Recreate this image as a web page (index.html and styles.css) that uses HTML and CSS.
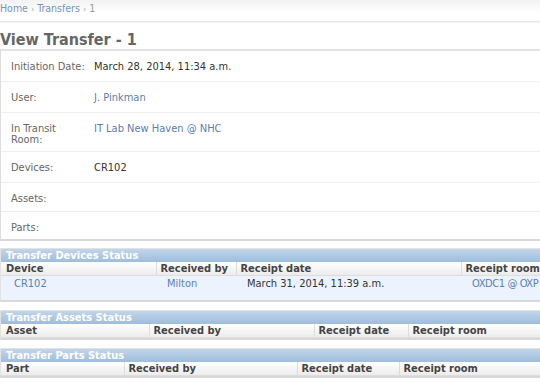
FILE: index.html
```html
<!DOCTYPE html>
<html lang="en">
<head>
  <meta charset="UTF-8">
  <title>View Transfer - 1</title>
  <link rel="stylesheet" href="styles.css">
</head>
<body>

  <div class="breadcrumbs">
    <a href="#">Home</a> <span class="sep">&rsaquo;</span> <a href="#">Transfers</a> <span class="sep">&rsaquo;</span> 1
  </div>

  <div class="content">
    <h1>View Transfer - 1</h1>

    <div class="details">
      <div class="form-row">
        <div class="label">Initiation Date:</div>
        <div class="value">March 28, 2014, 11:34 a.m.</div>
      </div>
      <div class="form-row">
        <div class="label">User:</div>
        <div class="value"><a href="#">J. Pinkman</a></div>
      </div>
      <div class="form-row">
        <div class="label">In Transit Room:</div>
        <div class="value"><a href="#">IT Lab New Haven @ NHC</a></div>
      </div>
      <div class="form-row">
        <div class="label">Devices:</div>
        <div class="value">CR102</div>
      </div>
      <div class="form-row">
        <div class="label">Assets:</div>
        <div class="value empty"></div>
      </div>
      <div class="form-row last">
        <div class="label">Parts:</div>
      </div>
    </div>

    <div class="module">
      <h2>Transfer Devices Status</h2>
      <table>
        <colgroup>
          <col style="width: 155px">
          <col style="width: 80px">
          <col style="width: 225px">
          <col style="width: 140px">
        </colgroup>
        <thead>
          <tr><th>Device</th><th>Received by</th><th>Receipt date</th><th>Receipt room</th></tr>
        </thead>
        <tbody>
          <tr>
            <td><a href="#">CR102</a></td>
            <td><a href="#">Milton</a></td>
            <td>March 31, 2014, 11:39 a.m.</td>
            <td class="room"><a href="#">OXDC1 @ OXP</a></td>
          </tr>
        </tbody>
      </table>
    </div>

    <div class="module">
      <h2>Transfer Assets Status</h2>
      <table>
        <colgroup>
          <col style="width: 148px">
          <col style="width: 165px">
          <col style="width: 94px">
          <col style="width: 193px">
        </colgroup>
        <thead>
          <tr><th>Asset</th><th>Received by</th><th>Receipt date</th><th>Receipt room</th></tr>
        </thead>
      </table>
    </div>

    <div class="module">
      <h2>Transfer Parts Status</h2>
      <table>
        <colgroup>
          <col style="width: 123px">
          <col style="width: 173px">
          <col style="width: 102px">
          <col style="width: 202px">
        </colgroup>
        <thead>
          <tr><th>Part</th><th>Received by</th><th>Receipt date</th><th>Receipt room</th></tr>
        </thead>
      </table>
    </div>
  </div>

</body>
</html>
```

FILE: styles.css
```css
html, body {
  overflow: hidden;
}

body {
  margin: 0;
  width: 600px;
  font-family: "DejaVu Sans Condensed", "DejaVu Sans", sans-serif;
  font-stretch: condensed;
  font-size: 11px;
  color: #333;
  background: #fff;
}

a {
  color: #5b80b2;
  text-decoration: none;
}

.breadcrumbs {
  height: 21px;
  line-height: 17px;
  font-size: 10.5px;
  color: #999;
  background: linear-gradient(#f2f2f2, #fff 60%);
  border-bottom: 1px solid #e8e8e8;
  box-shadow: 0 1px 1px rgba(0, 0, 0, 0.04);
}

.breadcrumbs a {
  color: #7493c0;
}

.breadcrumbs .sep {
  color: #aaa;
  font-size: 9px;
}

h1 {
  margin: 0;
  padding: 8px 0 0;
  height: 19px;
  line-height: 19px;
  font-size: 16px;
  font-weight: bold;
  color: #666;
}

.details {
  border: 1px solid #ddd;
  border-top: 2px solid #e4e4e4;
  border-bottom: 2px solid #d8d8d8;
}

.form-row {
  display: flex;
  padding: 7px 10px 6px;
  border-bottom: 1px solid #eee;
}

.form-row.last {
  border-bottom: none;
}

.label {
  width: 78px;
  margin-right: 5px;
  padding-top: 3px;
  line-height: 11px;
  color: #666;
}

.value {
  line-height: 17px;
}

.value.empty {
  height: 15px;
}

.module {
  margin-top: 7px;
  border: 1px solid #e2e2e2;
  border-bottom: 2px solid #d8d8d8;
}

.module + .module {
  margin-top: 8px;
}

.module h2 {
  margin: 0;
  padding: 0 5px;
  height: 13px;
  line-height: 13px;
  font-size: 11px;
  font-weight: bold;
  color: #fff;
  background: linear-gradient(#c2d5ea, #9fbddc);
}

table {
  border-collapse: collapse;
  table-layout: fixed;
  width: 600px;
}

th {
  padding: 0 4px;
  height: 13px;
  line-height: 13px;
  text-align: left;
  font-weight: bold;
  color: #444;
  background: linear-gradient(#fff, #ececec);
  border-left: 1px solid #ddd;
  border-bottom: 1px solid #ddd;
}

th:first-child {
  border-left: none;
  padding-left: 5px;
}

td {
  padding: 2px 11px 10px;
  line-height: 12px;
  vertical-align: top;
  white-space: nowrap;
  overflow: hidden;
  background: #edf3fe;
}

td:first-child {
  padding-left: 13px;
}

td.room {
  letter-spacing: -0.4px;
}
```
